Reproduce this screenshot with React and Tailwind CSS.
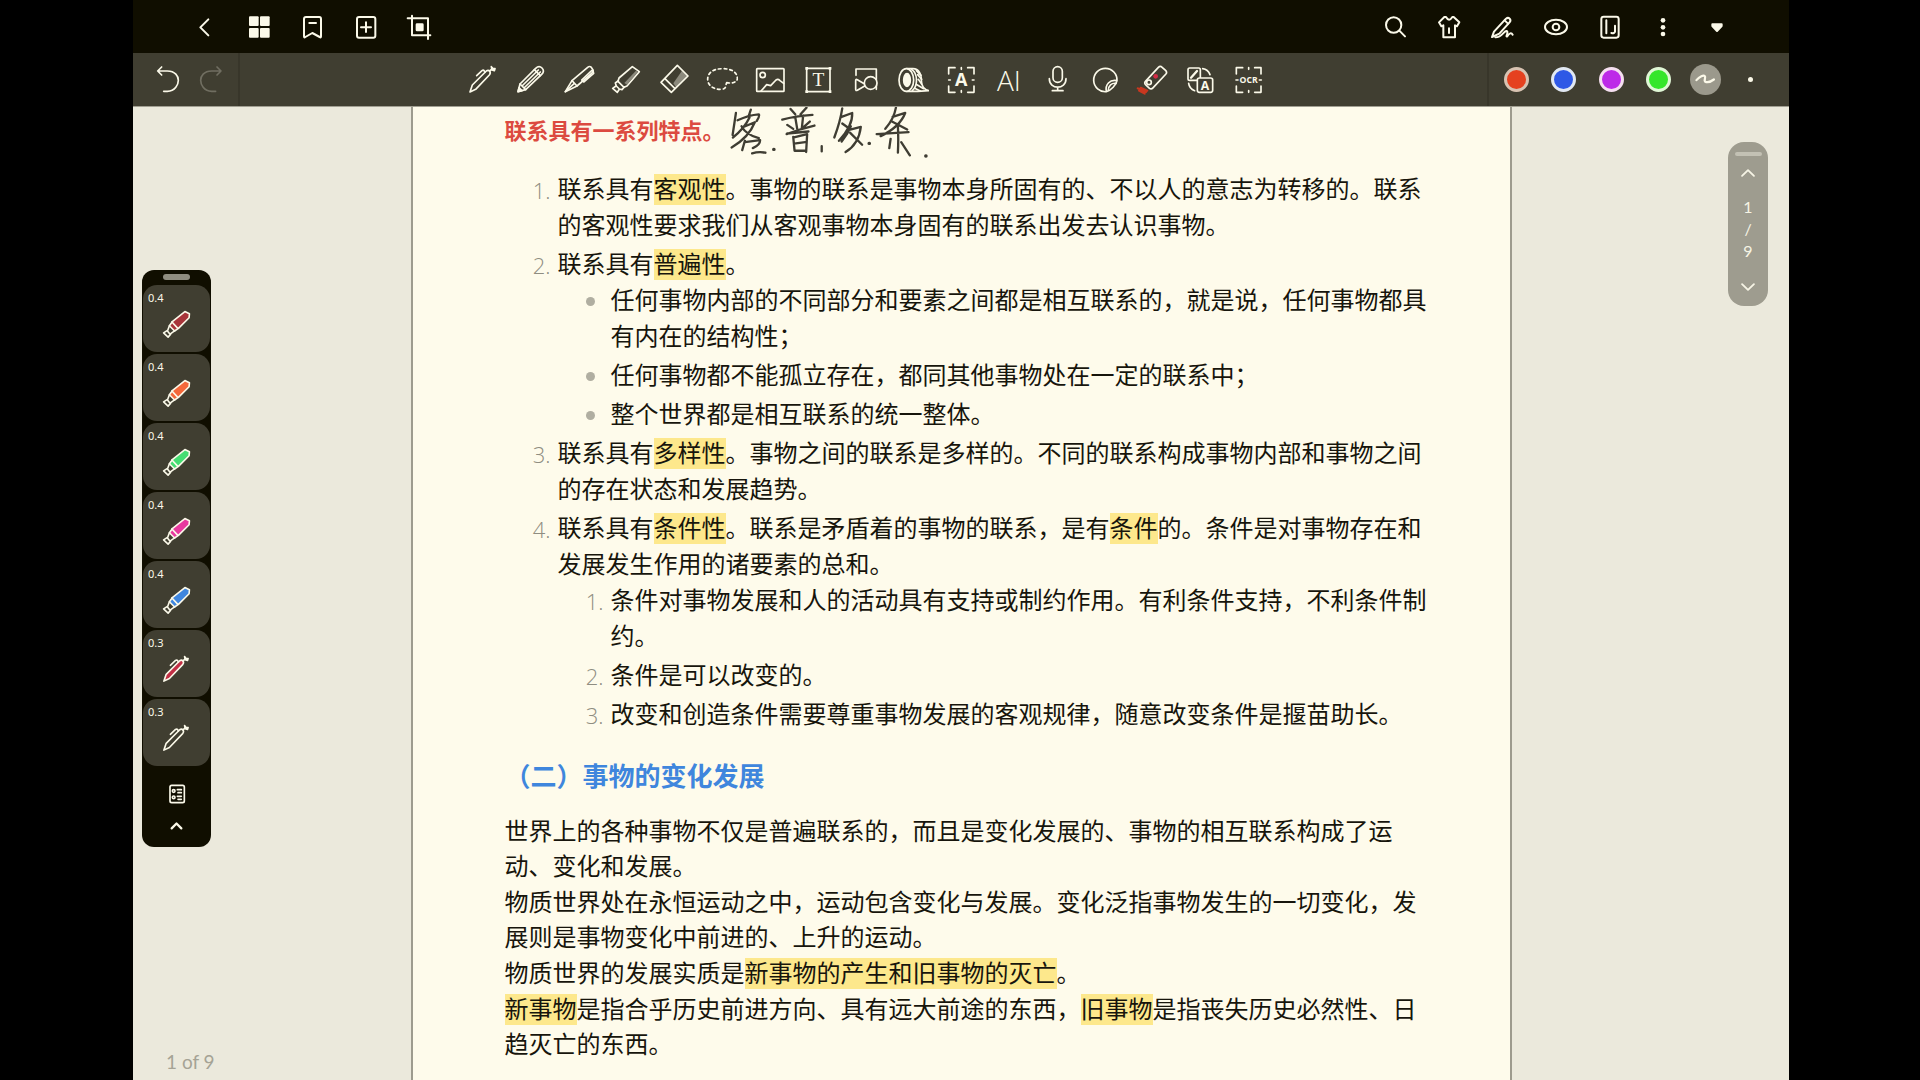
import React from "react";

const ICONS = {
  back: <path d="M58 25 34 49 58 73" strokeWidth="6" />,
  grid: (
    <g fill="currentColor" stroke="none">
      <rect x="18" y="16" width="29" height="29" rx="3" />
      <rect x="51" y="16" width="29" height="29" rx="3" />
      <rect x="18" y="51" width="29" height="29" rx="3" />
      <rect x="51" y="51" width="29" height="29" rx="3" />
    </g>
  ),
  bookmark: (
    <g strokeWidth="6">
      <path d="M30 18H70Q75 18 75 24V76Q75 81 71 78L49 66 28 78Q24 81 24 76V24Q24 18 30 18Z" />
      <path d="M40 36H60" />
    </g>
  ),
  addPage: (
    <g strokeWidth="6">
      <rect x="21" y="18" width="55" height="62" rx="6" />
      <path d="M48 34V63M33 49H63" />
    </g>
  ),
  crop: (
    <g strokeWidth="6">
      <path d="M27 14V73H82M14 22H75V84" />
      <rect x="38" y="37" width="24" height="24" rx="4" fill="currentColor" stroke="none" />
    </g>
  ),
  search: (
    <g strokeWidth="6">
      <circle cx="44" cy="42" r="23" />
      <path d="M61 59 78 76" />
    </g>
  ),
  shirt: (
    <g strokeWidth="6">
      <path d="M34 18 39 18Q48 34 58 18L62 18 79 34 72 46 66 43V79H31V43L25 46 18 34Z" />
      <path d="M48 52V66" />
    </g>
  ),
  sign: (
    <g strokeWidth="6">
      <path d="M18 78 24 62 60 23Q66 18 71 23 76 29 70 35L40 68 18 78Z" />
      <path d="M56 28 66 38M28 79C48 80 54 58 62 60 70 63 56 80 64 76 70 66 76 64 80 71" />
    </g>
  ),
  eye: (
    <g strokeWidth="6">
      <ellipse cx="48" cy="48" rx="33" ry="22" />
      <circle cx="48" cy="48" r="10" />
    </g>
  ),
  notebook: (
    <g strokeWidth="6">
      <rect x="22" y="17" width="52" height="63" rx="7" />
      <path d="M37 28V67M63 44V62Q62 68 52 66" />
    </g>
  ),
  more: (
    <g fill="currentColor" stroke="none">
      <circle cx="48" cy="28" r="7" />
      <circle cx="48" cy="49" r="7" />
      <circle cx="48" cy="69" r="7" />
    </g>
  ),
  caret: <path d="M34 40H62V45L48 60 34 45Z" fill="currentColor" strokeWidth="6" />,
  undo: <path d="M17 21H46C70 21 79 37 79 49S70 82 46 82H35M29 9 17 21 29 33" />,
  redo: <path d="M78 21H50C26 21 17 37 17 49S26 82 50 82H62M66 9 78 21 66 33" />,
  pencil: (
    <>
      <path d="M9 83 15 60 62 13Q72 3 81 12 90 21 80 31L32 77Z" />
      <path d="M15 60 32 77M21 66 70 18M27 72 76 24M58 17 76 35" />
      <path d="M9 83 12 71 21 80Z" fill="currentColor" />
    </>
  ),
  fountain: (
    <>
      <path d="M7 83 27 50 74 10Q80 5 85 10L90 18Q91 22 88 26L42 66Z" />
      <path d="M7 83 34 58M27 50 42 66M90 20 92 28 62 54 56 48 86 20" />
    </>
  ),
  eraser: (
    <>
      <path d="M72 20 90 36 55 71 46 58Z" fill="#8c8a7d" stroke="none" />
      <path d="M58 4 90 36 40 85 9 55ZM20 43 51 74" strokeLinejoin="round" />
    </>
  ),
  lasso: (
    <path
      d="M62 56C82 60 94 52 94 44 94 24 76 14 50 14 22 14 5 26 5 46 5 64 22 76 44 76 64 76 58 62 62 56Z"
      strokeDasharray="8 9"
    />
  ),
  image: (
    <>
      <rect x="8" y="14" width="82" height="68" rx="2" />
      <circle cx="26" cy="33" r="8" />
      <path d="M21 81 38 62 50 65 66 48Q72 44 78 50L89 58" />
    </>
  ),
  text: (
    <>
      <rect x="14" y="13" width="70" height="70" />
      <path d="M14 13h.1M84 13h.1M14 83h.1M84 83h.1" strokeWidth="8" strokeLinecap="square" />
      <text x="49" y="67" textAnchor="middle" fontSize="58" fill="currentColor" stroke="none" className="font-['Liberation_Serif',serif]">T</text>
    </>
  ),
  shapes: (
    <>
      <path d="M18 34V15H79V76" />
      <path d="M17 50Q17 44 22 47L44 60Q47 63 44 66L22 79Q17 81 17 76Z" />
      <circle cx="62" cy="57" r="19" fill="#403e31" />
    </>
  ),
  tape: (
    <>
      <path d="M29 14H48C66 14 74 32 73 48 73 64 80 76 95 80L62 82H29" />
      <path d="M44 16C64 30 62 66 46 80M58 20 72 34M62 32 74 46M60 62 80 74M64 46 74 60M56 74 70 81" />
      <ellipse cx="28" cy="48" rx="22" ry="34" fill="#403e31" />
      <ellipse cx="30" cy="48" rx="10" ry="19" fill="currentColor" />
    </>
  ),
  scanText: (
    <>
      <path d="M11 30V11H30M68 11H87V30M87 66V85H68M30 85H11V66M49 11v5M49 80v5M11 48h5M82 48h5" />
      <text x="49" y="67" textAnchor="middle" fontSize="54" fontWeight="700" fill="currentColor" stroke="none" className="font-['Open_Sans',sans-serif]">A</text>
    </>
  ),
  mic: (
    <>
      <rect x="36" y="8" width="28" height="47" rx="14" />
      <path d="M25 44C25 78 75 78 75 44M50 70V80M34 80H66" />
    </>
  ),
  sticker: (
    <>
      <path d="M52 83A35 35 0 1 1 84 50C82 62 66 80 52 83C48 62 62 46 84 50" />
      <path d="M58 79C58 66 68 56 81 58" />
    </>
  ),
  laser: (
    <>
      <rect x="23" y="26" width="72" height="30" rx="8" transform="rotate(-47 59 41)" />
      <circle cx="39" cy="55" r="7" />
      <circle cx="59" cy="37" r="7" fill="#d22c46" stroke="none" />
      <path d="M5 73 30 84M9 80 26 89M14 71 34 80M8 74 28 84" stroke="#c8371f" strokeWidth="6" />
    </>
  ),
  translate: (
    <>
      <rect x="12" y="12" width="37" height="37" rx="5" />
      <path d="M21 41 39 21" strokeWidth="7" />
      <path d="M56 14Q72 16 78 32M14 58Q16 74 32 80" />
      <rect x="40" y="42" width="46" height="43" rx="6" fill="#403e31" />
      <text x="63" y="77" textAnchor="middle" fontSize="37" fontWeight="700" fill="currentColor" stroke="none" className="font-['Open_Sans',sans-serif]">A</text>
    </>
  ),
  ocr: (
    <>
      <path d="M13 30V11H32M68 11H87V30M87 66V85H68M32 85H13V66M50 11v5M50 80v5M12 48h6M82 48h6" />
      <text x="50" y="57" textAnchor="middle" fontSize="26" fontWeight="700" fill="currentColor" stroke="none" className="font-['Open_Sans',sans-serif]">OCR</text>
    </>
  ),
  presets: (
    <>
      <rect x="27" y="22" width="43" height="52" rx="5" />
      <circle cx="38" cy="39" r="4" />
      <circle cx="38" cy="58" r="4" />
      <path d="M49 35H61M51 44H61M49 55H61M51 64H61" />
    </>
  ),
  chevronUp: <path d="M33 57 48 42 63 57" strokeWidth="7" />,
  thinUp: <path d="M29 57 48 39 67 57" strokeWidth="6" />,
  thinDown: <path d="M29 39 48 57 67 39" strokeWidth="6" />,
  wave: <path d="M20 50C30 38 42 34 46 38S40 54 50 56 66 54 74 48" strokeWidth="7" />,
};

function Icon({ name, className = "size-8" }) {
  return (
    <svg viewBox="0 0 96 96" className={className} fill="none" stroke="currentColor" strokeWidth="5" strokeLinecap="round" strokeLinejoin="round" aria-hidden="true">
      {ICONS[name]}
    </svg>
  );
}

function Highlighter({ fill, shade, className = "size-8" }) {
  return (
    <svg viewBox="0 0 96 96" className={className} fill="none" stroke="currentColor" strokeWidth="5" strokeLinecap="round" strokeLinejoin="round" aria-hidden="true">
      <path d="M67 8 88 23 51 66 42 70 24 52 27 42Z" fill={fill} />
      {shade && <path d="M78 20 84 24 51 62 43 57Z" fill={shade} stroke="none" />}
      <path d="M24 51 16 57 19 66 28 75 36 77 43 69M18 66 8 73 22 85 28 76" />
    </svg>
  );
}

function MarkerPen({ fill }) {
  return (
    <svg viewBox="0 0 96 96" className="size-[31px]" fill="none" stroke="currentColor" strokeWidth="5" strokeLinecap="round" strokeLinejoin="round" aria-hidden="true">
      <path d="M74 8 88 15 87 27 54 60 42 68 26 52 36 38Z" fill={fill} />
      <path d="M34 40 52 60M26 52 20 68 28 78 42 68M20 66 8 74 22 87 30 78" />
    </svg>
  );
}

function Pen({ fill = "none", className = "size-8" }) {
  return (
    <svg viewBox="0 0 96 96" className={className} fill="none" stroke="currentColor" strokeWidth="5" strokeLinecap="round" strokeLinejoin="round" aria-hidden="true">
      <path d="M9 84 16 63 58 21Q64 17 68 22 72 27 67 33L26 76Z" fill={fill} />
      <path d="M29 35 45 20Q49 17 52 21L54 25M68 21 76 14" />
      <path d="M73 8 77 13 84 14 82 20 75 18Z" fill="currentColor" />
    </svg>
  );
}

const leftActions = [
  ["back", "返回"],
  ["grid", "缩略图"],
  ["bookmark", "书签"],
  ["addPage", "添加页面"],
  ["crop", "裁剪"],
];
const rightActions = [
  ["search", "搜索"],
  ["shirt", "主题"],
  ["sign", "手写"],
  ["eye", "阅读模式"],
  ["notebook", "笔记本"],
  ["more", "更多"],
  ["caret", "收起"],
];
const tools = ["pen", "pencil", "fountain", "highlighter", "eraser", "lasso", "image", "text", "shapes", "tape", "scanText", "ai", "mic", "sticker", "laser", "translate", "ocr"];

function ToolGlyph({ name }) {
  if (name === "pen") return <Pen />;
  if (name === "highlighter") return <Highlighter fill="none" shade="#8c8a7d" />;
  if (name === "ai") {
    return <span className="block w-8 text-center font-['Open_Sans',sans-serif] text-[28px] font-light leading-8">AI</span>;
  }
  return <Icon name={name} />;
}

const presets = [
  { size: "0.4", color: "#a8353a" },
  { size: "0.4", color: "#f4683a" },
  { size: "0.4", color: "#45dd72" },
  { size: "0.4", color: "#e8399f" },
  { size: "0.4", color: "#3f86df" },
  { size: "0.3", color: "#c22f45", pen: true },
  { size: "0.3", color: "none", pen: true },
];

function Mark({ children }) {
  return <mark className="bg-[#fde88c] py-px text-inherit">{children}</mark>;
}

function Item({ marker, children }) {
  return (
    <li className="grid grid-cols-[46px_1fr] gap-x-[7px]">
      {marker ? (
        <span className="text-right font-['Open_Sans',sans-serif] text-[22px] font-light text-[#8f8d81]">{marker}</span>
      ) : (
        <span className="mr-[9px] mt-[14px] size-[9px] justify-self-end rounded-full bg-[#b0aea1]" />
      )}
      <div>{children}</div>
    </li>
  );
}

function Ink() {
  return (
    <svg viewBox="0 0 630 160" className="absolute -top-1.5 left-full h-[53px] w-[210px] max-w-none" fill="none" stroke="#3f3d33" strokeWidth="7" strokeLinecap="round" strokeLinejoin="round" role="img" aria-label="手写批注">
      <path d="M31 18 21 84M36 40Q70 24 100 22 104 26 94 42M76 8 70 26M72 32Q56 66 22 92M50 62 88 46Q70 92 18 122M48 58Q62 84 100 94M58 102 50 130M58 106 104 100Q104 114 82 124M80 140Q100 134 120 138" />
      <path d="M145 128h1M433 110h1M604 148h1" strokeWidth="10" />
      <path d="M290 118V134M196 6 210 22M244 2 226 22M171 38Q210 28 262 24M210 30 216 66M234 26 230 64M186 54 204 66M254 44 236 60M184 82Q224 66 268 56M186 80 250 74M204 90 208 132M206 92 246 82 243 136M212 110 240 106M208 132 242 132" />
      <path d="M352 4Q346 44 328 92M350 30 382 18Q384 56 342 102M352 50 372 64M378 58 366 82 350 104M376 68 408 60Q402 112 362 136M376 78 412 114" />
      <path d="M514 2Q508 36 482 66M504 30 542 18Q526 60 468 88M502 44 548 68M456 82 552 76M520 58Q522 96 520 138M498 96 494 124M530 106 556 146" />
    </svg>
  );
}

export default function App() {
  return (
    <div className="h-screen overflow-hidden bg-black pl-[133px] pr-[131px] text-[#fbf9e9]">
      <div className="flex h-full flex-col">
        <header className="flex h-[53px] shrink-0 items-center justify-between bg-[#100e00] px-14">
          <nav className="flex w-[246px] justify-between">
            {leftActions.map(([name, label]) => (
              <button key={name} type="button" aria-label={label}><Icon name={name} /></button>
            ))}
          </nav>
          <nav className="flex w-[354px] justify-between">
            {rightActions.map(([name, label]) => (
              <button key={name} type="button" aria-label={label}><Icon name={name} /></button>
            ))}
          </nav>
        </header>

        <div className="flex h-[53px] shrink-0 items-stretch bg-[#403e31]">
          <div className="flex w-[107px] items-center gap-[11px] border-r-2 border-[#38362a] pl-[19px]">
            <button type="button" aria-label="撤销"><Icon name="undo" /></button>
            <button type="button" aria-label="重做" className="text-[#706e61]"><Icon name="redo" /></button>
          </div>
          <div className="flex flex-1 items-center justify-center pl-1">
            <div className="flex w-[797px] justify-between">
              {tools.map((name) => (
                <button key={name} type="button" aria-label={name}><ToolGlyph name={name} /></button>
              ))}
            </div>
          </div>
          <div className="flex w-[302px] items-center border-l-2 border-[#38362a] pl-[11px]">
            <div className="flex w-[267px] items-center justify-between">
              <button type="button" aria-label="红色" className="mx-1 size-[25px] rounded-full border-3 border-[#d8c3b2] bg-[#e5411f]" />
              <button type="button" aria-label="蓝色" className="mx-1 size-[25px] rounded-full border-3 border-[#e1e8f2] bg-[#2e58e6]" />
              <button type="button" aria-label="紫色" className="mx-1 size-[25px] rounded-full border-3 border-[#f5dff0] bg-[#bd2ae8]" />
              <button type="button" aria-label="绿色" className="mx-1 size-[25px] rounded-full border-3 border-[#e0f7d6] bg-[#35e62b]" />
              <button type="button" aria-label="线型" className="grid size-[31px] place-items-center rounded-full bg-[#9b998c]"><Icon name="wave" className="size-[31px]" /></button>
              <button type="button" aria-label="粗细" className="grid size-8 place-items-center"><span className="size-[5px] rounded-full bg-[#fbf9e9]" /></button>
            </div>
          </div>
        </div>

        <div className="grid min-h-0 flex-1 grid-cols-[1fr_minmax(0,1101px)_1fr] grid-rows-[minmax(0,1fr)] border-t border-[#a19f92] bg-[#ebe9dc]">
          <div className="flex flex-col pl-[9px] pt-[163px]">
            <aside className="flex w-[69px] flex-col items-center rounded-xl bg-[#100e00] px-px pb-1.5">
              <span className="mb-[5px] mt-1 h-1.5 w-[27px] rounded-full bg-[#8f8d80]" />
              <div className="flex w-full flex-col gap-0.5">
                {presets.map(({ size, color, pen }) => (
                  <button key={color} type="button" className="flex h-[67px] flex-col items-center rounded-[14px] bg-[#403e31] pt-1">
                    <span className="self-start pl-[5px] font-['Noto_Sans',sans-serif] text-[11px] leading-[18px]">{size}</span>
                    <span className="mt-0.5">{pen ? <Pen fill={color} className="size-[31px]" /> : <MarkerPen fill={color} />}</span>
                  </button>
                ))}
              </div>
              <button type="button" aria-label="预设" className="mt-3"><Icon name="presets" /></button>
              <button type="button" aria-label="收起"><Icon name="chevronUp" className="size-[31px]" /></button>
            </aside>
            <p className="mb-1.5 mt-auto pl-6 font-[Lato,sans-serif] text-[19px] leading-6 text-[#a5a395]">1 of 9</p>
          </div>

          <main className="overflow-hidden border-x-2 border-[#9d9b8e] bg-[#fefbeb] pl-[92px] pr-[74px] pt-1.5 font-[Inter,'Noto_Sans_CJK_SC',sans-serif] text-2xl text-[#17150c]" lang="zh-CN">
            <div className="relative w-fit">
              <h3 className="text-[22px] font-bold leading-9 text-[#dc4a40]">联系具有一系列特点。</h3>
              <Ink />
            </div>
            <ol className="mt-[23px] flex flex-col gap-[3px] leading-9">
              <Item marker="1.">联系具有<Mark>客观性</Mark>。事物的联系是事物本身所固有的、不以人的意志为转移的。联系的客观性要求我们从客观事物本身固有的联系出发去认识事物。</Item>
              <Item marker="2.">
                联系具有<Mark>普遍性</Mark>。
                <ul className="flex flex-col gap-[3px]">
                  <Item>任何事物内部的不同部分和要素之间都是相互联系的，就是说，任何事物都具有内在的结构性；</Item>
                  <Item>任何事物都不能孤立存在，都同其他事物处在一定的联系中；</Item>
                  <Item>整个世界都是相互联系的统一整体。</Item>
                </ul>
              </Item>
              <Item marker="3.">联系具有<Mark>多样性</Mark>。事物之间的联系是多样的。不同的联系构成事物内部和事物之间的存在状态和发展趋势。</Item>
              <Item marker="4.">
                联系具有<Mark>条件性</Mark>。联系是矛盾着的事物的联系，是有<Mark>条件</Mark>的。条件是对事物存在和发展发生作用的诸要素的总和。
                <ol className="flex flex-col gap-[3px]">
                  <Item marker="1.">条件对事物发展和人的活动具有支持或制约作用。有利条件支持，不利条件制约。</Item>
                  <Item marker="2.">条件是可以改变的。</Item>
                  <Item marker="3.">改变和创造条件需要尊重事物发展的客观规律，随意改变条件是揠苗助长。</Item>
                </ol>
              </Item>
            </ol>
            <h2 className="mt-[26px] text-[26px] font-bold leading-9 text-[#3f86dd]">（二）事物的变化发展</h2>
            <div className="mt-[19px] flex flex-col gap-px leading-[35px]">
              <p>世界上的各种事物不仅是普遍联系的，而且是变化发展的、事物的相互联系构成了运动、变化和发展。</p>
              <p>物质世界处在永恒运动之中，运动包含变化与发展。变化泛指事物发生的一切变化，发展则是事物变化中前进的、上升的运动。</p>
              <p>物质世界的发展实质是<Mark>新事物的产生和旧事物的灭亡</Mark>。</p>
              <p><Mark>新事物</Mark>是指合乎历史前进方向、具有远大前途的东西，<Mark>旧事物</Mark>是指丧失历史必然性、日趋灭亡的东西。</p>
            </div>
          </main>

          <div className="flex items-start justify-end pr-[21px] pt-[35px]">
            <nav className="flex h-[164px] w-10 flex-col items-center rounded-2xl bg-[#9e9c8f] pt-2.5 font-[Lato,sans-serif] text-base text-[#f6f4e5]" aria-label="翻页">
              <span className="h-1 w-[27px] rounded-full bg-[#c3c1b4]" />
              <button type="button" aria-label="上一页" className="mt-0.5"><Icon name="thinUp" className="size-[30px]" /></button>
              <span className="mt-2 leading-[22px]">1</span>
              <span className="leading-[22px]">/</span>
              <span className="leading-[22px]">9</span>
              <button type="button" aria-label="下一页" className="mt-2.5"><Icon name="thinDown" className="size-[30px]" /></button>
            </nav>
          </div>
        </div>
      </div>
    </div>
  );
}
